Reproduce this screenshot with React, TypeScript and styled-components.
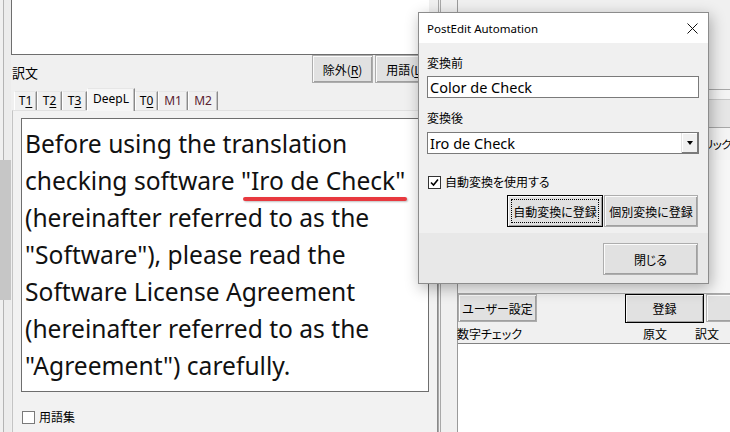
import React from 'react';
import styled, { createGlobalStyle } from 'styled-components';

const jp = `"Noto Sans CJK JP", "Noto Sans", sans-serif`;
const ui = `"Noto Sans", "Noto Sans CJK JP", sans-serif`;

const GlobalStyle = createGlobalStyle`
  html, body {
    margin: 0;
    padding: 0;
    background: #f0f0f0;
  }
  body {
    font-family: ${jp};
    font-feature-settings: "palt";
    color: #000;
  }
`;

const Window = styled.div`
  position: relative;
  width: 730px;
  height: 432px;
  overflow: hidden;
  display: flex;
  background: #f0f0f0;
`;

/* ---------- far left strip ---------- */

const LeftStrip = styled.div`
  width: 11px;
  flex: none;
  display: flex;
  flex-direction: column;
`;

const StripPart = styled.div<{ $h?: number; $dark?: boolean }>`
  height: ${p => (p.$h ? `${p.$h}px` : 'auto')};
  flex: ${p => (p.$h ? 'none' : '1')};
  box-sizing: border-box;
  margin-left: ${p => (p.$dark ? 0 : 3)}px;
  border-left: ${p => (p.$dark ? 'none' : '1px solid #b4b4b4')};
  background: ${p => (p.$dark ? '#c6c6c6' : '#ececec')};
`;

/* ---------- left panel ---------- */

const LeftPanel = styled.div`
  width: 427px;
  flex: none;
  display: flex;
  flex-direction: column;
`;

const SourceBox = styled.div`
  height: 55px;
  width: 418px;
  box-sizing: border-box;
  background: #fff;
  border-left: 1px solid #6e6e6e;
  border-bottom: 1px solid #6e6e6e;
`;

const Toolbar = styled.div`
  height: 33px;
  display: flex;
  align-items: flex-start;
  padding-left: 1px;
`;

const Caption = styled.span`
  font-size: 13px;
  line-height: 16px;
  margin-top: 10px;
`;

const ToolButtons = styled.div`
  margin-left: auto;
  margin-right: 2px;
  display: flex;
  gap: 2px;
`;

const Btn = styled.button<{ $w: number; $h: number; $default?: boolean; $focus?: boolean }>`
  position: relative;
  box-sizing: border-box;
  flex: none;
  width: ${p => p.$w}px;
  height: ${p => p.$h}px;
  padding: 0;
  font-family: ${jp};
  font-feature-settings: "palt";
  font-size: 12px;
  color: #000;
  background: #e1e1e1;
  border: 1px solid ${p => (p.$default ? '#000' : '#adadad')};
  box-shadow: inset 1px 1px 0 #fbfbfb, inset -1px -1px 0 #a0a0a0;
  outline: none;
  display: flex;
  align-items: center;
  justify-content: center;

  &::after {
    content: '';
    display: ${p => (p.$focus ? 'block' : 'none')};
    position: absolute;
    inset: 3px;
    border: 1px dotted #000;
  }
`;

const Key = styled.span`
  text-decoration: underline;
  text-underline-offset: 2px;
`;

const TabStrip = styled.div`
  height: 22px;
  display: flex;
  align-items: flex-end;
  padding-left: 3px;
  position: relative;
  z-index: 1;
`;

const Tab = styled.div<{ $w: number; $active?: boolean; $tone?: string }>`
  box-sizing: border-box;
  width: ${p => p.$w}px;
  height: ${p => (p.$active ? 23 : 19)}px;
  margin-bottom: ${p => (p.$active ? -1 : 0)}px;
  padding-bottom: ${p => (p.$active ? 3 : 1)}px;
  border-style: solid;
  border-width: 1px 1px 0 1px;
  border-color: #e6e6e6 #8a8a8a transparent #ffffff;
  box-shadow: inset -1px 0 0 #c4c4c4;
  background: ${p => (p.$active ? '#f6f6f6' : '#f0f0f0')};
  color: ${p => p.$tone || '#000'};
  font-family: ${ui};
  font-size: 12px;
  display: flex;
  align-items: center;
  justify-content: center;
`;

const TabPage = styled.div`
  flex: 1;
  margin-left: 1px;
  box-sizing: border-box;
  border-top: 1px solid #e0e0e0;
  border-left: 1px solid #c4c4c4;
  border-right: 1px solid #8a8a8a;
  background: #f2f2f2;
  padding: 7px 0 0 8px;
  display: flex;
  flex-direction: column;
`;

const TextArea = styled.div`
  box-sizing: border-box;
  width: 408px;
  height: 274px;
  background: #fff;
  border: 1px solid #6e6e6e;
  padding: 6px 0 0 3px;
  overflow: hidden;
  font-family: ${ui};
  font-size: 24.6px;
  line-height: 37px;
  white-space: nowrap;
  color: #111;
`;

const Marked = styled.span`
  position: relative;

  &::after {
    content: '';
    position: absolute;
    left: 2px;
    right: -2px;
    bottom: -4px;
    height: 4px;
    border-radius: 2px;
    background: #e8393f;
    box-shadow: 1px 1px 2px rgba(0, 0, 0, 0.25);
  }
`;

const CheckRow = styled.label`
  display: flex;
  align-items: center;
  gap: 4px;
  font-size: 12px;
  line-height: 16px;
`;

const Box = styled.span<{ $checked?: boolean }>`
  box-sizing: border-box;
  width: 13px;
  height: 13px;
  flex: none;
  background: #fff;
  border: 1px solid ${p => (p.$checked ? '#333' : '#7a7a7a')};
  display: flex;
  align-items: center;
  justify-content: center;
`;

const GlossaryRow = styled(CheckRow)`
  margin: 17px 0 0 1px;
`;

/* ---------- splitter + right panel ---------- */

const Splitter = styled.div`
  width: 3px;
  flex: none;
  box-sizing: border-box;
  border-left: 1px solid #a8a8a8;
  border-right: 1px solid #a8a8a8;
  background: #f0f0f0;
`;

const RightPanel = styled.div`
  flex: 1;
  display: flex;
  min-width: 0;
`;

const Gutter = styled.div`
  width: 17px;
  flex: none;
  box-sizing: border-box;
  border-right: 1px solid #9a9a9a;
  background: #f0f0f0;
`;

const RightBody = styled.div`
  flex: 1;
  min-width: 0;
  display: flex;
  flex-direction: column;
`;

const Area = styled.div<{ $h: number; $bg: string }>`
  height: ${p => p.$h}px;
  flex: none;
  background: ${p => p.$bg};
`;

const Band = styled.div`
  height: 39px;
  flex: none;
  box-sizing: border-box;
  border-top: 1px solid #a8a8a8;
  border-bottom: 1px solid #a8a8a8;
  background: #e6e6e6;
`;

const BandTop = styled.div`
  height: 9px;
  border-bottom: 1px solid #c8c8c8;
  background: #f4f4f4;
`;

const HintRow = styled.div`
  height: 32px;
  flex: none;
  display: flex;
  align-items: center;
  padding-left: 236px;
  font-size: 11.5px;
  letter-spacing: -0.5px;
  white-space: nowrap;
  background: #f4f4f4;
`;

const ButtonRow = styled.div`
  height: 30px;
  flex: none;
  box-sizing: border-box;
  border-top: 1px solid #a8a8a8;
  display: flex;
  align-items: flex-start;
`;

const ListHeader = styled.div`
  height: 20px;
  flex: none;
  display: grid;
  grid-template-columns: 186px 52px 1fr;
  align-items: center;
  margin-left: -1px;
  font-size: 12px;
  white-space: nowrap;
`;

const ListBox = styled.div`
  flex: 1;
  background: #fff;
  border-top: 1px solid #828282;
`;

/* ---------- dialog ---------- */

const Dialog = styled.div`
  position: absolute;
  left: 418px;
  top: 12px;
  width: 291px;
  height: 272px;
  box-sizing: border-box;
  border: 1px solid #8c8c8c;
  background: #f0f0f0;
  box-shadow: 2px 4px 14px rgba(0, 0, 0, 0.3);
  display: flex;
  flex-direction: column;
  z-index: 5;
`;

const TitleBar = styled.div`
  height: 30px;
  flex: none;
  background: #fff;
  display: flex;
  align-items: center;
  justify-content: space-between;
  padding: 0 10px 0 8px;
  font-family: ${ui};
  font-size: 11.5px;
`;

const DialogBody = styled.div`
  flex: 1;
  padding: 12px 9px 0 8px;
  display: flex;
  flex-direction: column;
`;

const FieldLabel = styled.div<{ $top?: number }>`
  font-size: 12px;
  line-height: 16px;
  margin-top: ${p => p.$top || 0}px;
`;

const Field = styled.div<{ $top: number }>`
  box-sizing: border-box;
  height: 22px;
  width: 272px;
  margin-top: ${p => p.$top}px;
  background: #fff;
  border: 1px solid #7a7a7a;
  display: flex;
  align-items: center;
  padding-left: 2px;
  font-family: ${ui};
  font-size: 14.5px;
  color: #000;
`;

const DropButton = styled.span`
  margin-left: auto;
  box-sizing: border-box;
  width: 17px;
  height: 20px;
  background: #f0f0f0;
  border-left: 1px solid #e3e3e3;
  box-shadow: inset -1px -1px 0 #7a7a7a, inset 1px 1px 0 #fff;
  display: flex;
  align-items: center;
  justify-content: center;

  &::before {
    content: '';
    border-left: 3.5px solid transparent;
    border-right: 3.5px solid transparent;
    border-top: 4px solid #000;
  }
`;

const DialogCheck = styled(CheckRow)`
  margin: 20px 0 0 1px;
`;

const DialogButtons = styled.div`
  display: flex;
  justify-content: flex-end;
  gap: 1px;
  margin: 5px 1px 0 0;
`;

const Footer = styled.div`
  height: 50px;
  flex: none;
  background: #e8e8e8;
  display: flex;
  justify-content: flex-end;
  align-items: flex-start;
  padding: 10px 10px 0 0;
  box-sizing: border-box;
`;

const CloseIcon = () => (
  <svg width="11" height="11" viewBox="0 0 11 11">
    <path d="M0.5 0.5 L10.5 10.5 M10.5 0.5 L0.5 10.5" stroke="#111" strokeWidth="1" fill="none" />
  </svg>
);

const Tick = () => (
  <svg width="9" height="9" viewBox="0 0 9 9">
    <path d="M1 4.5 L3.5 7 L8 1.5" stroke="#000" strokeWidth="1.6" fill="none" />
  </svg>
);

const tabs = [
  { label: <>T<Key>1</Key></>, w: 23 },
  { label: <>T<Key>2</Key></>, w: 25 },
  { label: <>T<Key>3</Key></>, w: 25 },
  { label: <>DeepL</>, w: 48, active: true },
  { label: <>T<Key>0</Key></>, w: 23 },
  { label: <>M1</>, w: 30, tone: '#5a2230' },
  { label: <>M2</>, w: 30, tone: '#5a2230' },
];

export default function App() {
  return (
    <>
      <GlobalStyle />
      <Window>
        <LeftStrip>
          <StripPart $h={160} />
          <StripPart $h={140} $dark />
          <StripPart />
        </LeftStrip>

        <LeftPanel>
          <SourceBox />
          <Toolbar>
            <Caption>訳文</Caption>
            <ToolButtons>
              <Btn $w={61} $h={28}>除外(<Key>R</Key>)</Btn>
              <Btn $w={61} $h={28}>用語(<Key>L</Key>)</Btn>
            </ToolButtons>
          </Toolbar>
          <TabStrip>
            {tabs.map((t, i) => (
              <Tab key={i} $w={t.w} $active={t.active} $tone={t.tone}>
                {t.label}
              </Tab>
            ))}
          </TabStrip>
          <TabPage>
            <TextArea>
              Before using the translation
              <br />
              checking software <Marked>"Iro de Check"</Marked>
              <br />
              (hereinafter referred to as the
              <br />
              "Software"), please read the
              <br />
              Software License Agreement
              <br />
              (hereinafter referred to as the
              <br />
              "Agreement") carefully.
            </TextArea>
            <GlossaryRow>
              <Box />
              用語集
            </GlossaryRow>
          </TabPage>
        </LeftPanel>

        <Splitter />

        <RightPanel>
          <Gutter />
          <RightBody>
            <Area $h={89} $bg="#f0f0f0" />
            <Band>
              <BandTop />
            </Band>
            <HintRow>クリック</HintRow>
            <Area $h={133} $bg="#f7f7f7" />
            <ButtonRow>
              <Btn $w={79} $h={28}>ユーザー設定</Btn>
              <Btn $w={79} $h={29} $default style={{ marginLeft: 88 }}>登録</Btn>
              <Btn $w={79} $h={28} style={{ marginLeft: 2 }} />
            </ButtonRow>
            <ListHeader>
              <span>数字チェック</span>
              <span>原文</span>
              <span>訳文</span>
            </ListHeader>
            <ListBox />
          </RightBody>
        </RightPanel>

        <Dialog>
          <TitleBar>
            <span>PostEdit Automation</span>
            <CloseIcon />
          </TitleBar>
          <DialogBody>
            <FieldLabel>変換前</FieldLabel>
            <Field $top={5}>Color de Check</Field>
            <FieldLabel $top={12}>変換後</FieldLabel>
            <Field $top={6}>
              Iro de Check
              <DropButton />
            </Field>
            <DialogCheck>
              <Box $checked>
                <Tick />
              </Box>
              自動変換を使用する
            </DialogCheck>
            <DialogButtons>
              <Btn $w={96} $h={32} $default $focus>自動変換に登録</Btn>
              <Btn $w={94} $h={32}>個別変換に登録</Btn>
            </DialogButtons>
          </DialogBody>
          <Footer>
            <Btn $w={95} $h={32}>閉じる</Btn>
          </Footer>
        </Dialog>
      </Window>
    </>
  );
}
